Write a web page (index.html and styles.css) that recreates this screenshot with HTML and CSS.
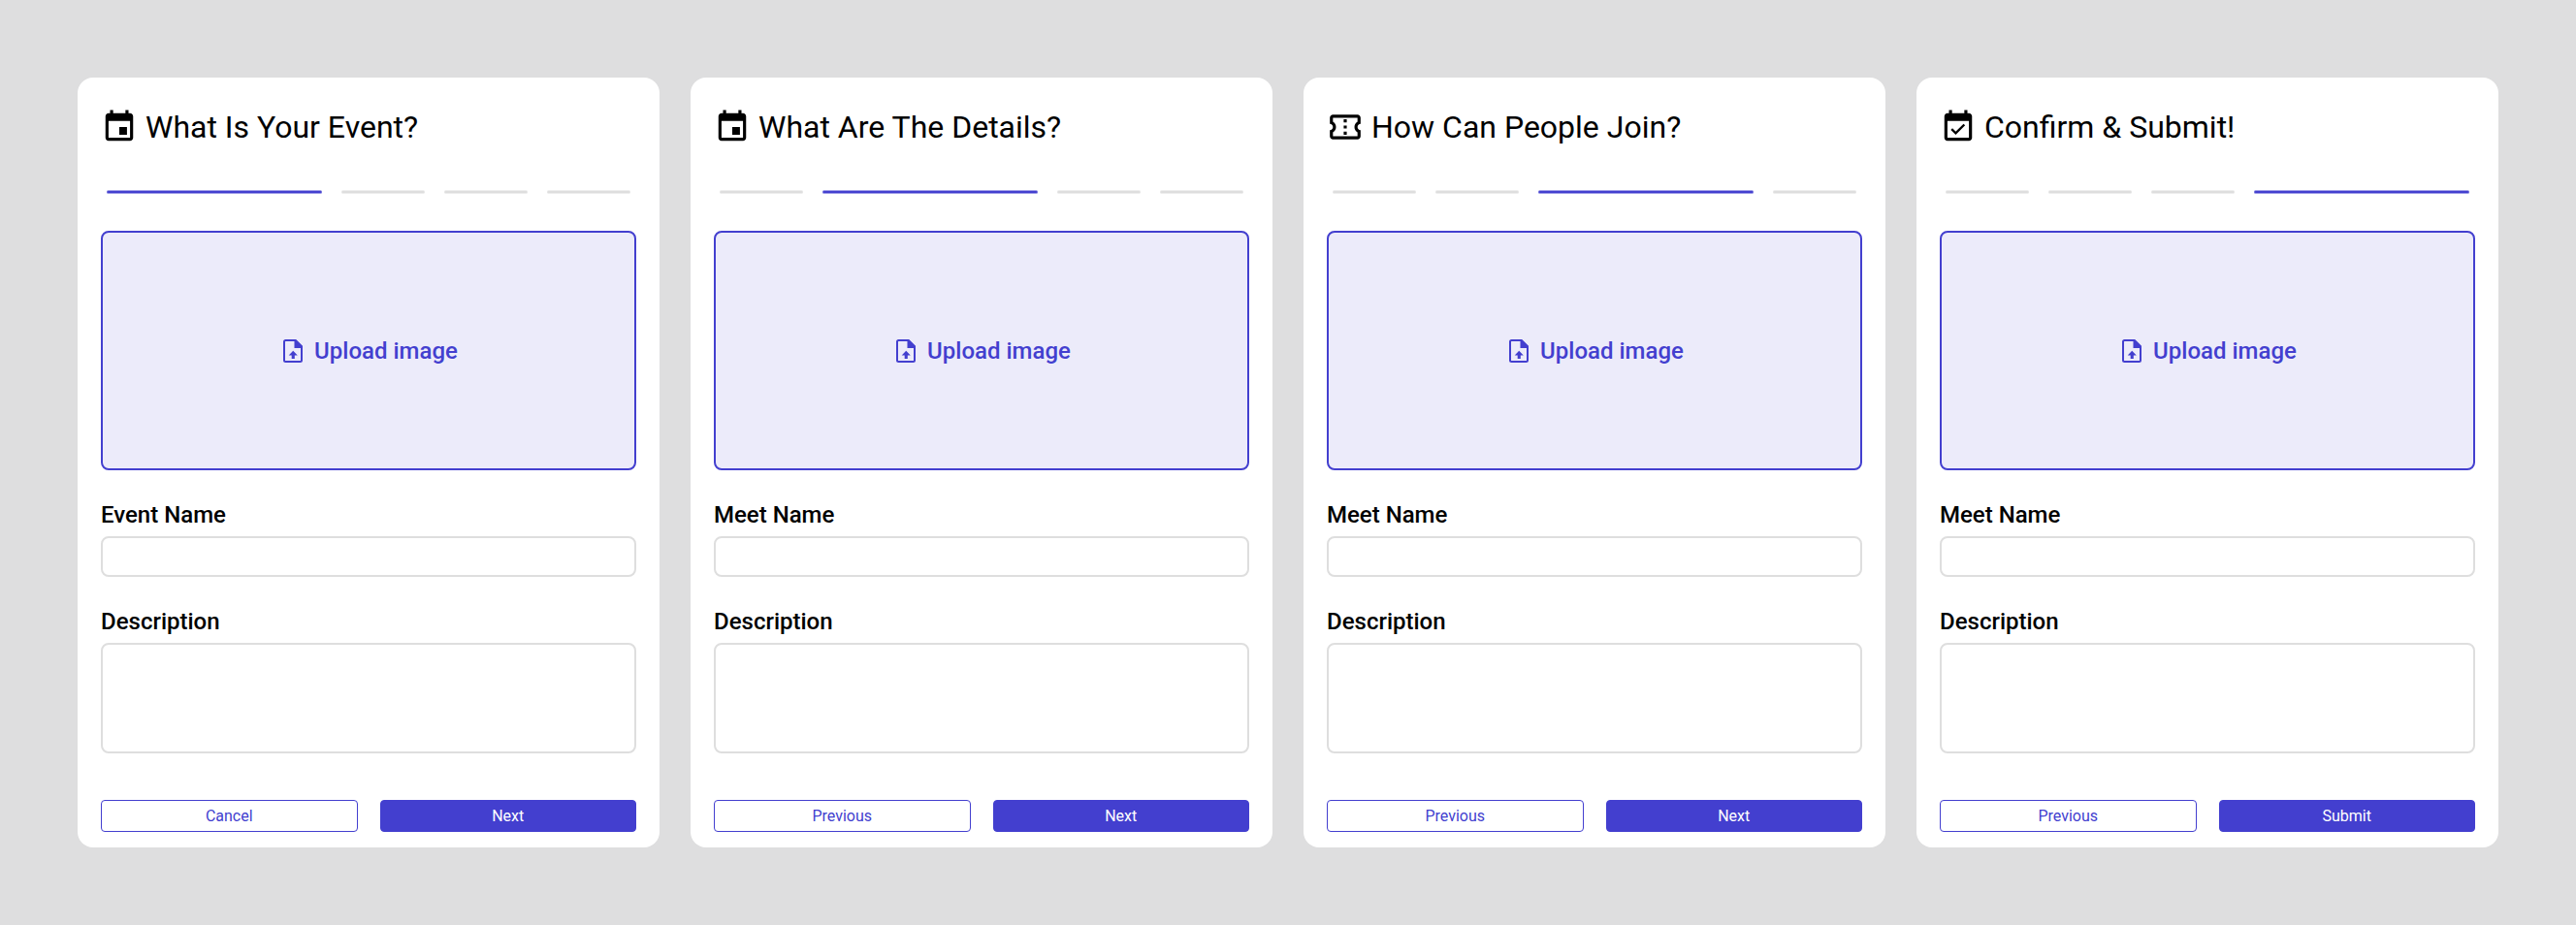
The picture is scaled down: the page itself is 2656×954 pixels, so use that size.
FILE: index.html
```
<!DOCTYPE html>
<html lang="en">
<head>
<meta charset="utf-8">
<title>Create Event</title>
<link rel="stylesheet" href="styles.css">
</head>
<body>
<svg class="sprite" aria-hidden="true">
  <symbol id="event" viewBox="0 0 24 24"><path d="M17 12h-5v5h5v-5zM16 1v2H8V1H6v2H5c-1.11 0-1.99.9-1.99 2L3 19c0 1.1.89 2 2 2h14c1.1 0 2-.9 2-2V5c0-1.1-.9-2-2-2h-1V1h-2zm3 18H5V8h14v11z"/></symbol>
  <symbol id="ticket" viewBox="0 0 24 24"><path d="M22 10V6c0-1.1-.9-2-2-2H4c-1.1 0-1.99.9-1.99 2v4c1.1 0 1.99.9 1.99 2s-.89 2-2 2v4c0 1.1.9 2 2 2h16c1.1 0 2-.9 2-2v-4c-1.1 0-2-.9-2-2s.9-2 2-2zm-2-1.46c-1.19.69-2 1.99-2 3.46s.81 2.77 2 3.46V18H4v-2.54c1.19-.69 2-1.99 2-3.46 0-1.48-.8-2.77-1.99-3.46L4 6h16v2.54zM11 15h2v2h-2zm0-4h2v2h-2zm0-4h2v2h-2z"/></symbol>
  <symbol id="check" viewBox="0 0 24 24"><path d="M16 1v2H8V1H6v2H5c-1.11 0-1.99.9-1.99 2L3 19c0 1.1.89 2 2 2h14c1.1 0 2-.9 2-2V5c0-1.1-.9-2-2-2h-1V1h-2zm3 18H5V8h14v11z"/><path class="tick" d="M7.700 13.300l2.700 2.700 5.600-5.600"/></symbol>
  <symbol id="upload" viewBox="0 0 20 24"><path class="sheet" d="M2.500 1h10.300L19 7.200v14.300a1.500 1.500 0 0 1-1.500 1.500h-15A1.500 1.500 0 0 1 1 21.500v-19A1.500 1.500 0 0 1 2.500 1z"/><path d="M11.500 1h2L19.500 7v2h-8zM10.200 11.800l4.600 4.700h-3V20H8.700v-3.500h-3z"/></symbol>
</svg>
<main class="board">
  <section class="card">
    <h1 class="title"><svg class="title-icon"><use href="#event"/></svg>What Is Your Event?</h1>
    <div class="steps"><i class="step active"></i><i class="step"></i><i class="step"></i><i class="step"></i></div>
    <div class="upload"><svg class="upload-icon"><use href="#upload"/></svg>Upload image</div>
    <label class="field">Event Name<input class="input"></label>
    <label class="field">Description<textarea class="input area"></textarea></label>
    <div class="actions"><button class="btn">Cancel</button><button class="btn primary">Next</button></div>
  </section>
  <section class="card">
    <h1 class="title"><svg class="title-icon"><use href="#event"/></svg>What Are The Details?</h1>
    <div class="steps"><i class="step"></i><i class="step active"></i><i class="step"></i><i class="step"></i></div>
    <div class="upload"><svg class="upload-icon"><use href="#upload"/></svg>Upload image</div>
    <label class="field">Meet Name<input class="input"></label>
    <label class="field">Description<textarea class="input area"></textarea></label>
    <div class="actions"><button class="btn">Previous</button><button class="btn primary">Next</button></div>
  </section>
  <section class="card">
    <h1 class="title"><svg class="title-icon"><use href="#ticket"/></svg>How Can People Join?</h1>
    <div class="steps"><i class="step"></i><i class="step"></i><i class="step active"></i><i class="step"></i></div>
    <div class="upload"><svg class="upload-icon"><use href="#upload"/></svg>Upload image</div>
    <label class="field">Meet Name<input class="input"></label>
    <label class="field">Description<textarea class="input area"></textarea></label>
    <div class="actions"><button class="btn">Previous</button><button class="btn primary">Next</button></div>
  </section>
  <section class="card">
    <h1 class="title"><svg class="title-icon"><use href="#check"/></svg>Confirm &amp; Submit!</h1>
    <div class="steps"><i class="step"></i><i class="step"></i><i class="step"></i><i class="step active"></i></div>
    <div class="upload"><svg class="upload-icon"><use href="#upload"/></svg>Upload image</div>
    <label class="field">Meet Name<input class="input"></label>
    <label class="field">Description<textarea class="input area"></textarea></label>
    <div class="actions"><button class="btn">Previous</button><button class="btn primary">Submit</button></div>
  </section>
</main>
</body>
</html>
```
FILE: styles.css
```
* { box-sizing: border-box; }
html, body { height: 954px; overflow: hidden; }
body { margin: 0; background: #dededf; font-family: Roboto, sans-serif; color: #000; }
.sprite { display: none; }
.board { display: flex; gap: 32px; padding: 80px; height: 954px; }
.card { width: 600px; height: 794px; padding: 24px; background: #fff; border-radius: 16px; }
.title { display: flex; align-items: center; gap: 8px; height: 54px; margin: 0; font-size: 32px; font-weight: 400; line-height: 38px; }
.title-icon { width: 38px; height: 38px; fill: currentColor; }
.tick { fill: none; stroke: currentColor; stroke-width: 1.5; }
.steps { display: flex; gap: 20px; padding: 0 6px; margin-top: 38px; height: 4px; }
.step { flex: 1 1 0; height: 4px; border-radius: 2px; background: #dedede; border: solid #eee; border-width: 1px 0; }
.step.active { flex: 0 0 222px; background: #433fcf; border-color: #a19fe7; }
.upload { display: flex; align-items: center; justify-content: center; gap: 12px; height: 247px; margin-top: 38px; padding-left: 4px; border: 2px solid #433fcf; border-radius: 8px; background: #ecebfa; color: #433fcf; font-size: 24px; font-weight: 500; }
.upload-icon { width: 20px; height: 24px; fill: currentColor; }
.sheet { fill: none; stroke: currentColor; stroke-width: 2; }
.field { display: block; font-size: 24px; font-weight: 500; line-height: 28px; margin-top: 32px; }
.input { display: block; width: 100%; height: 42px; margin: 8px 0 0; padding: 8px; border: 2px solid #dedede; border-radius: 8px; background: #fff; resize: none; outline: none; }
.area { height: 114px; }
.actions { display: grid; grid-template-columns: 1fr 1fr; gap: 23px; margin-top: 48px; }
.btn { height: 33px; padding: 0; border: 1px solid #433fcf; border-radius: 4px; background: #fff; color: #433fcf; font: 400 16px/19px Roboto, sans-serif; }
.btn.primary { background: #433fcf; color: #fff; }
```
